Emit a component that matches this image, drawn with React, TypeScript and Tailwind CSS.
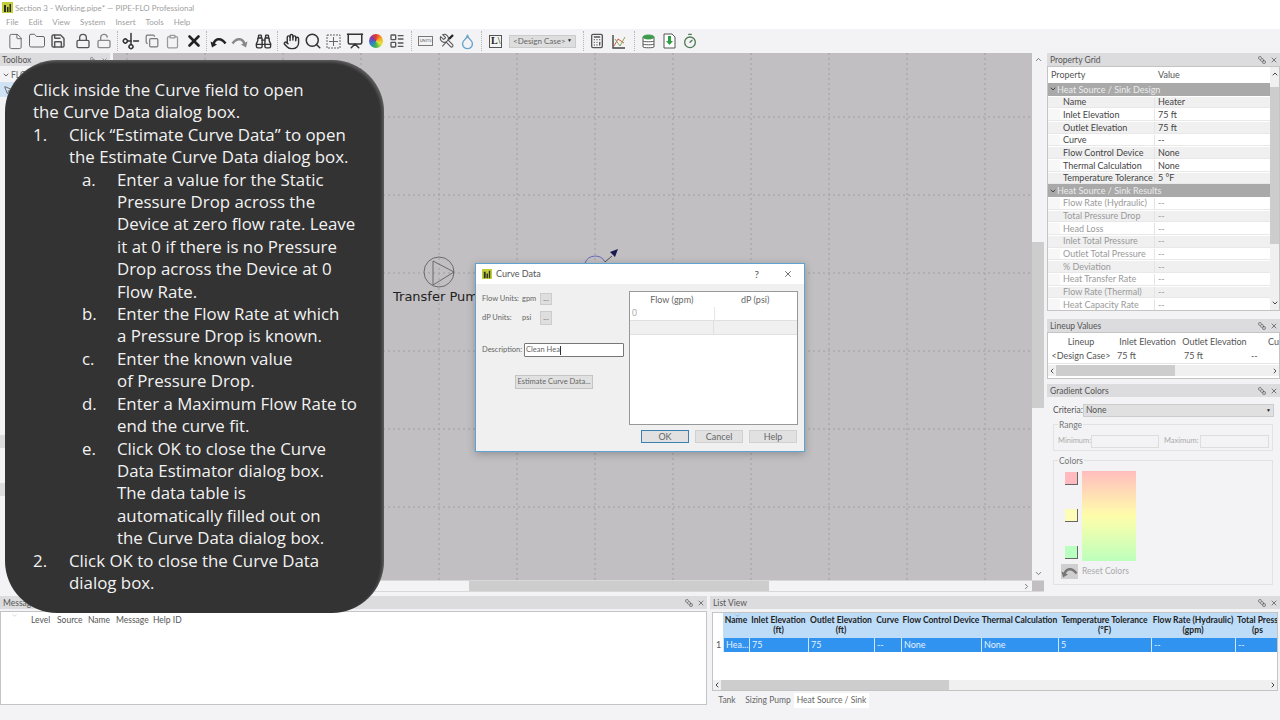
import type { ReactNode } from "react";
import {
  Binoculars, Calculator, ChevronDown, ChevronLeft, ChevronRight, ChevronUp, Clipboard, Copy, File, Folder, Hand,
  LayoutList, Lock, LockOpen, MousePointer2, Presentation, Save, Scissors, Search, SquareStack, Timer, X, Droplet,
} from "lucide-react";

const ui = "font-['Lato',sans-serif]";

function PipeLogo({ size = 11 }: { size?: number }) {
  return (
    <svg width={size} height={size} viewBox="0 0 11 11">
      <rect width="11" height="11" fill="#c3cc3c" />
      <rect x="2" y="3" width="2" height="7" fill="#26301a" />
      <rect x="5" y="5" width="1.5" height="5" fill="#26301a" />
      <rect x="7.5" y="2" width="1.5" height="8" fill="#26301a" />
    </svg>
  );
}

function ArcArrow({ color, flip }: { color: string; flip?: boolean }) {
  return (
    <svg width="17" height="13" viewBox="0 0 17 13" className={flip ? "-scale-x-100" : ""}>
      <path d="M3.5 9C5 3.5 11 2 15.5 8.5" fill="none" stroke={color} strokeWidth="2.4" />
      <path d="M0.5 6.5L7 9.5L2 12.5Z" fill={color} />
    </svg>
  );
}

function Btn({ children }: { children: ReactNode }) {
  return <span className="flex h-[21px] w-[21px] shrink-0 items-center justify-center">{children}</span>;
}

function Sep({ className = "mx-[3px]" }: { className?: string }) {
  return <div className={`h-[20px] w-px shrink-0 border-l border-dotted border-[#b5b5b5] ${className}`} />;
}

function PanelHead({ title }: { title: string }) {
  return (
    <div className="flex h-[13px] items-center justify-between bg-[#dcdcde] pl-[3px] pr-[2px] pt-px text-[8.5px] text-[#555]">
      <span>{title}</span>
      <span className="flex items-center gap-[4px] text-[#444]">
        <SquareStack size={8} />
        <X size={8} />
      </span>
    </div>
  );
}

const design = [
  ["Name", "Heater"],
  ["Inlet Elevation", "75 ft"],
  ["Outlet Elevation", "75 ft"],
  ["Curve", "--"],
  ["Flow Control Device", "None"],
  ["Thermal Calculation", "None"],
  ["Temperature Tolerance", "5 °F"],
];
const results = [
  "Flow Rate (Hydraulic)",
  "Total Pressure Drop",
  "Head Loss",
  "Inlet Total Pressure",
  "Outlet Total Pressure",
  "% Deviation",
  "Heat Transfer Rate",
  "Flow Rate (Thermal)",
  "Heat Capacity Rate",
];

function GroupRow({ title }: { title: string }) {
  return (
    <div className="flex h-[12.67px] items-center bg-[#a9a9a9] pl-px text-[9px] text-[#ececec]">
      <ChevronDown size={8} strokeWidth={3} className="text-[#444]" />
      {title}
    </div>
  );
}

function PropRow({ label, value, dim, odd }: { label: string; value: string; dim?: boolean; odd: boolean }) {
  return (
    <div className={`flex h-[12.67px] items-center whitespace-nowrap border-b border-[#e8e8e8] pt-px text-[9px] ${dim ? "text-[#9a9a9a]" : "text-[#444]"}`}>
      <div className={`h-full w-[12px] ${odd ? "bg-[#f0f0f0]" : "bg-[#f7f7f7]"}`} />
      <div className={`flex h-full w-[95px] items-center border-r border-[#e4e4e4] pl-[3px] ${odd ? "bg-[#f0f0f0]" : "bg-white"}`}>{label}</div>
      <div className={`flex h-full flex-1 items-center pl-[3px] ${odd ? "bg-[#f0f0f0]" : "bg-white"}`}>{value}</div>
    </div>
  );
}

function Scrollbar() {
  return (
    <div className="flex w-[9px] flex-col items-center bg-[#f0f0f0]">
      <ChevronUp size={8} strokeWidth={3} className="mt-[3px] text-[#444]" />
      <div className="mt-[9px] h-[157px] w-full bg-[#cdcdcd]" />
      <div className="flex-1" />
      <ChevronDown size={8} strokeWidth={3} className="my-[3px] text-[#444]" />
    </div>
  );
}

function Swatch({ color }: { color: string }) {
  return <div className="h-[13px] w-[13px] border-b border-r border-[#666]" style={{ backgroundColor: color }} />;
}

const listCols = "grid-cols-[10px_26px_59px_66px_27px_80px_77px_93px_84px_45px]";
const listHead = [
  ["Name", ""],
  ["Inlet Elevation", "(ft)"],
  ["Outlet Elevation", "(ft)"],
  ["Curve", ""],
  ["Flow Control Device", ""],
  ["Thermal Calculation", ""],
  ["Temperature Tolerance", "(°F)"],
  ["Flow Rate (Hydraulic)", "(gpm)"],
  ["Total Press", "(ps"],
];
const listRow = ["Hea...", "75", "75", "--", "None", "None", "5", "--", "--"];

function Canvas() {
  const xs = [0, 1, 2, 3, 4, 5, 6, 7, 8, 9, 10, 11].map((k) => 14 + k * 78);
  const ys = [0, 1, 2, 3, 4, 5, 6].map((k) => 64 - 78 + k * 78);
  return (
    <div className="relative flex-1 overflow-hidden bg-[#c1bfc1]">
      <svg className="absolute inset-0 h-full w-full">
        {xs.map((x) => (
          <line key={x} x1={x} x2={x} y1="0" y2="540" stroke="#a09ea0" strokeWidth="1" strokeDasharray="2 3" />
        ))}
        {ys.map((y) => (
          <line key={y} x1="0" x2="930" y1={y} y2={y} stroke="#a09ea0" strokeWidth="1" strokeDasharray="2 3" />
        ))}
        <circle cx="326" cy="219" r="15" fill="none" stroke="#555" strokeWidth="0.8" />
        <path d="M320 208L341 219L320 232Z" fill="none" stroke="#555" strokeWidth="0.8" />
        <path d="M472 210A11 11 0 0 1 492 209" fill="none" stroke="#4f4fb5" strokeWidth="0.8" />
        <path d="M492 209L499 203" stroke="#333" strokeWidth="0.8" />
        <path d="M497 199L505 196L502 204Z" fill="#1a1a50" />
      </svg>
      <span className="absolute left-[280px] top-[234px] whitespace-nowrap font-['DejaVu_Sans',sans-serif] text-[13px] text-[#222]">
        Transfer Pump
      </span>
    </div>
  );
}

function CurveDialog() {
  return (
    <div className="absolute left-[475px] top-[263px] flex h-[189px] w-[330px] flex-col border border-[#5fa3d0] bg-[#f0f0f0] text-[7.5px] text-[#666] shadow-[0_2px_8px_rgba(0,0,0,0.25)]">
      <div className="flex h-[20px] shrink-0 items-center bg-white pl-[6px] text-[9px] text-[#555]">
        <PipeLogo size={10} />
        <span className="ml-[4px] flex-1">Curve Data</span>
        <span className="mr-[24px] text-[10px]">?</span>
        <X size={10} className="mr-[11px]" />
      </div>
      <div className="flex flex-1 whitespace-nowrap pl-[6px] pr-[6px] pt-[7px]">
        <div className="w-[147px] pt-[2px]">
          <div className="flex h-[12px] items-center">
            <span className="w-[40px]">Flow Units:</span>
            <span className="w-[18px]">gpm</span>
            <span className="flex h-[12px] w-[12px] items-center justify-center border border-[#ccc] bg-[#dedede]">...</span>
          </div>
          <div className="mt-[6px] flex h-[14px] items-center">
            <span className="w-[40px]">dP Units:</span>
            <span className="w-[18px]">psi</span>
            <span className="flex h-[14px] w-[12px] items-center justify-center border border-[#ccc] bg-[#dedede]">...</span>
          </div>
          <div className="mt-[18px] flex items-center">
            <span className="w-[42px]">Description:</span>
            <div className="flex h-[14px] w-[100px] items-center rounded-[1px] border border-[#777] bg-white pl-[1px]">
              Clean Hea<span className="h-[9px] w-px bg-[#333]" />
            </div>
          </div>
          <div className="ml-[33px] mt-[18px] flex h-[14px] w-[78px] items-center justify-center border border-[#c4c4c4] bg-[#e1e1e1]">
            Estimate Curve Data...
          </div>
        </div>
        <div className="flex flex-1 flex-col">
          <div className="h-[134px] border border-[#999] bg-white">
            <div className="grid h-[15px] grid-cols-2 items-center text-center text-[9px]">
              <span>Flow (gpm)</span>
              <span>dP (psi)</span>
            </div>
            <div className="grid h-[14px] grid-cols-2 border-b border-[#e0e0e0] pl-[2px] text-[8.5px] text-[#aaa]">
              <span className="border-r border-[#e6e6e6]">0</span>
              <span />
            </div>
            <div className="grid h-[14px] grid-cols-2 border-b border-[#e0e0e0] bg-[#f0f0f0]">
              <span className="border-r border-[#e0e0e0]" />
              <span />
            </div>
          </div>
          <div className="mt-[5px] flex justify-end gap-[6px] pr-px text-[9px]">
            <div className="flex h-[13px] w-[48px] items-center justify-center border border-[#3c7fb1] bg-[#e1e1e1]">OK</div>
            <div className="flex h-[13px] w-[48px] items-center justify-center border border-[#d0d0d0] bg-[#e1e1e1]">Cancel</div>
            <div className="flex h-[13px] w-[48px] items-center justify-center border border-[#d0d0d0] bg-[#e1e1e1]">Help</div>
          </div>
        </div>
      </div>
    </div>
  );
}

function Callout() {
  const sub = [
    ["a.", "Enter a value for the Static\nPressure Drop across the\nDevice at zero flow rate. Leave\nit at 0 if there is no Pressure\nDrop across the Device at 0\nFlow Rate."],
    ["b.", "Enter the Flow Rate at which\na Pressure Drop is known."],
    ["c.", "Enter the known value\nof Pressure Drop."],
    ["d.", "Enter a Maximum Flow Rate to\nend the curve fit."],
    ["e.", "Click OK to close the Curve\nData Estimator dialog box.\nThe data table is\nautomatically filled out on\nthe Curve Data dialog box."],
  ];
  return (
    <div className="absolute left-[5px] top-[60px] h-[553px] w-[379px] rounded-[52px] bg-[#333333] pl-[28px] pt-[19px] font-['Open_Sans',sans-serif] text-[16.85px] leading-[22.4px] text-[#f2f2f2] shadow-[inset_-2px_2px_3px_rgba(255,255,255,0.2)]">
      <p>
        Click inside the Curve field to open
        <br />
        the Curve Data dialog box.
      </p>
      <div className="flex">
        <span className="w-[36px]">1.</span>
        <span>
          Click “Estimate Curve Data” to open
          <br />
          the Estimate Curve Data dialog box.
        </span>
      </div>
      {sub.map(([k, t]) => (
        <div key={k} className="flex pl-[49px]">
          <span className="w-[35px]">{k}</span>
          <span className="whitespace-pre-line">{t}</span>
        </div>
      ))}
      <div className="flex">
        <span className="w-[36px]">2.</span>
        <span>
          Click OK to close the Curve Data
          <br />
          dialog box.
        </span>
      </div>
    </div>
  );
}

export default function App() {
  return (
    <div className={`relative flex h-[720px] w-[1280px] flex-col overflow-hidden bg-[#f3f3f5] ${ui}`}>
      {/* title + menu */}
      <div className="flex h-[15px] items-center bg-white pl-[2px] text-[8px] text-[#a0a0a0]">
        <PipeLogo />
        <span className="ml-[2px]">Section 3 - Working.pipe* — PIPE-FLO Professional</span>
      </div>
      <div className="flex h-[14px] items-center gap-[10px] bg-white pl-[6px] text-[8px] text-[#a0a0a0]">
        {["File", "Edit", "View", "System", "Insert", "Tools", "Help"].map((m) => (
          <span key={m}>{m}</span>
        ))}
      </div>

      {/* toolbar */}
      <div className="flex h-[24px] items-center pl-[5px]">
        <Btn><File size={17} strokeWidth={1.2} className="text-[#555]" /></Btn>
        <Btn><Folder size={18} strokeWidth={1.2} className="text-[#555]" /></Btn>
        <Btn><Save size={16} strokeWidth={2.2} className="text-[#555]" /></Btn>
        <span className="w-[4px]" />
        <Btn><Lock size={16} className="text-[#555]" /></Btn>
        <Btn><LockOpen size={16} className="text-[#888]" /></Btn>
        <Sep className="mx-[2.5px]" />
        <Btn><Scissors size={16} strokeWidth={2.2} className="rotate-[-45deg] text-[#333]" /></Btn>
        <Btn><Copy size={14} className="text-[#777]" /></Btn>
        <Btn><Clipboard size={15} className="text-[#999]" /></Btn>
        <Btn><X size={18} strokeWidth={3.5} className="text-[#222]" /></Btn>
        <Sep className="mx-[1.5px]" />
        <Btn><ArcArrow color="#222" /></Btn>
        <Btn><ArcArrow color="#888" flip /></Btn>
        <span className="w-[3px]" />
        <Btn><Binoculars size={17} className="text-[#333]" /></Btn>
        <Sep />
        <Btn><Hand size={17} className="text-[#333]" /></Btn>
        <Btn><Search size={18} className="text-[#333]" /></Btn>
        <Btn>
          <svg width="15" height="15" viewBox="0 0 15 15" fill="none" stroke="#666">
            <rect x="1" y="1" width="13" height="13" strokeDasharray="2 1" />
            <path d="M7.5 3V12M3 7.5H12" />
          </svg>
        </Btn>
        <Btn><Presentation size={18} className="text-[#333]" /></Btn>
        <Btn><span className="h-[14px] w-[14px] rounded-full bg-[conic-gradient(#e8372c,#f5a623,#e8e23a,#3eb54a,#2f80d0,#7b3fb0,#e8372c)]" /></Btn>
        <Btn><LayoutList size={16} className="text-[#555]" /></Btn>
        <span className="w-[1px]" />
        <Sep />
        <Btn><span className="flex h-[10px] w-[15px] items-center justify-center border border-[#777] text-[4px] text-[#555]">UNITS</span></Btn>
        <Btn>
          <svg width="16" height="16" viewBox="0 0 24 24" fill="none" stroke="#555" strokeWidth="1.6">
            <g transform="translate(24 0) scale(-1 1)">
              <path d="M14.7 6.3a1 1 0 0 0 0 1.4l1.6 1.6a1 1 0 0 0 1.4 0l3.77-3.77a6 6 0 0 1-7.94 7.94l-6.91 6.91a2.12 2.12 0 0 1-3-3l6.91-6.91a6 6 0 0 1 7.94-7.94l-3.76 3.76z" />
            </g>
            <path d="M21 3L15 9" stroke="#222" strokeWidth="3.5" />
            <path d="M15 9L5 20" />
          </svg>
        </Btn>
        <Btn><Droplet size={17} className="text-[#6aa5c8]" /></Btn>
        <Sep />
        <Btn>
          <span className="flex h-[13px] w-[13px] items-center border border-[#555] pl-px font-['Liberation_Serif',serif] text-[10px] font-bold leading-none text-[#222]">
            L<span className="text-[#4a6a2a]">\</span>
          </span>
        </Btn>
        <span className="ml-[3px] flex h-[13px] w-[67px] shrink-0 items-center justify-between border border-[#ccc] bg-[#dedede] pl-[3px] pr-[3px] text-[8px] text-[#666]">
          &lt;Design Case&gt;
          <span className="text-[5px] text-[#222]">▼</span>
        </span>
        <span className="w-[3.5px]" />
        <Sep />
        <Btn><Calculator size={16} className="text-[#555]" /></Btn>
        <Btn>
          <svg width="15" height="15" viewBox="0 0 15 15" fill="none">
            <path d="M2 1V14H14" stroke="#444" strokeWidth="1.4" />
            <path d="M3 12L7 5L13 9" stroke="#d05a3c" />
            <path d="M4 5L9 12L14 3" stroke="#8aa85a" />
          </svg>
        </Btn>
        <span className="w-[2px]" />
        <Sep />
        <Btn>
          <svg width="15" height="15" viewBox="0 0 15 15" fill="none">
            <path d="M2 3V13C2 14 13 14 13 13V3" fill="#fff" stroke="#555" />
            <path d="M2 7C2 8 13 8 13 7M2 10C2 11 13 11 13 10" stroke="#555" />
            <ellipse cx="7.5" cy="3" rx="5.5" ry="2" fill="#3f9a4e" stroke="#3f9a4e" />
          </svg>
        </Btn>
        <Btn>
          <svg width="15" height="16" viewBox="0 0 15 16" fill="none">
            <path d="M2 1H10L13 4V15H2Z" fill="#fff" stroke="#555" />
            <path d="M6 3H9V8H11L7.5 12L4 8H6Z" fill="#2e9f3f" />
          </svg>
        </Btn>
        <Btn><Timer size={16} className="text-[#4f7a56]" /></Btn>
      </div>

      {/* main */}
      <div className="flex h-[542px] shrink-0">
        <div className="flex w-[113px] shrink-0 flex-col bg-[#f3f3f5] pr-[3px]">
          <div className="flex h-[13px] shrink-0 items-center justify-between bg-[#dcdcde] pl-[2px] pr-[2px] pt-px text-[8.5px] text-[#555]">
            Toolbox
            <span className="flex items-center gap-[4px]">
              <SquareStack size={7} />
              <X size={7} />
            </span>
          </div>
          <div className="mt-[2px] flex h-[14px] items-center pl-[2px] text-[8.5px] text-[#666]">
            <ChevronDown size={8} strokeWidth={3} className="mr-[1px]" />
            FLOW
          </div>
          <div className="flex h-[15px] w-[16px] items-center justify-center bg-[#cfe3f5]">
            <MousePointer2 size={10} className="text-[#555]" />
          </div>
          <div className="mt-[338px] h-[13px] w-[5px] bg-[#dcdcdc]" />
          <div className="mt-[35px] h-[13px] w-[5px] bg-[#dcdcdc]" />
        </div>
        <div className="flex w-[931px] shrink-0 flex-col pb-[3px]">
          <div className="flex min-h-0 flex-1">
            <Canvas />
            <div className="flex w-[12px] flex-col items-center bg-[#f3f3f5]">
              <ChevronUp size={9} className="my-[2px] text-[#555]" />
              <div className="mt-[176px] h-[166px] w-full bg-[#cdcdcd]" />
              <div className="flex-1" />
              <ChevronDown size={9} className="my-[2px] text-[#555]" />
            </div>
          </div>
          <div className="flex h-[12px] items-center border-y border-[#d8d8d8] bg-[#f3f3f5]">
            <div className="h-full w-[356px]" />
            <div className="h-full w-[300px] bg-[#cdcdcd]" />
            <div className="flex-1" />
            <ChevronRight size={9} className="mr-[1px] text-[#555]" />
            <div className="h-full w-[12px] bg-[#c1bfc1]" />
          </div>
        </div>

        {/* right panels */}
        <div className="ml-[3px] flex w-[233px] shrink-0 flex-col">
          <PanelHead title="Property Grid" />
          <div className="flex h-[245px] shrink-0 border border-[#c4c4c4] bg-white">
            <div className="flex-1 overflow-hidden">
              <div className="flex h-[16px] items-center text-[9px] text-[#555]">
                <span className="w-[107px] pl-[3px]">Property</span>
                <span className="pl-[3px]">Value</span>
              </div>
              <GroupRow title="Heat Source / Sink Design" />
              {design.map(([l, v], i) => (
                <PropRow key={l} label={l} value={v} odd={i % 2 === 0} />
              ))}
              <GroupRow title="Heat Source / Sink Results" />
              {results.map((l, i) => (
                <PropRow key={l} label={l} value="--" dim odd={i % 2 === 1} />
              ))}
            </div>
            <Scrollbar />
          </div>

          <div className="mt-[8px]">
            <PanelHead title="Lineup Values" />
          </div>
          <div className="h-[47px] shrink-0 whitespace-nowrap border border-[#c4c4c4] bg-white pt-px text-[9px] text-[#555]">
            <div className="grid h-[15px] grid-cols-[66px_67px_67px_1fr] items-center text-center">
              <span>Lineup</span>
              <span>Inlet Elevation</span>
              <span>Outlet Elevation</span>
              <span className="text-right">Cu</span>
            </div>
            <div className="grid h-[15px] grid-cols-[66px_67px_67px_1fr] items-center border-b border-[#e4e4e4]">
              <span className="text-center">&lt;Design Case&gt;</span>
              <span className="pl-[3px]">75 ft</span>
              <span className="pl-[3px]">75 ft</span>
              <span className="pl-[3px]">--</span>
            </div>
            <div className="mt-[1px] flex h-[11px] items-center bg-[#f0f0f0]">
              <ChevronLeft size={8} strokeWidth={3} />
              <div className="h-full w-[119px] bg-[#cdcdcd]" />
              <div className="flex-1" />
              <ChevronRight size={8} strokeWidth={3} />
            </div>
          </div>

          <div className="mt-[5px]">
            <PanelHead title="Gradient Colors" />
          </div>
          <div className="flex-1 whitespace-nowrap px-[6px] pt-[7px] text-[8.5px] text-[#777]">
            <div className="flex items-center">
              <span className="w-[30px] text-[#555]">Criteria:</span>
              <span className="flex h-[13px] flex-1 items-center justify-between border border-[#ccc] bg-[#e0e0e0] px-[2px] text-[8.5px] text-[#555]">
                None
                <span className="text-[5px] text-[#222]">▼</span>
              </span>
            </div>
            <div className="relative mr-px mt-[7px] flex h-[27px] items-center gap-[4px] border border-[#e2e2e2] pl-[4px] pt-[7px] text-[7.5px] text-[#aaa]">
              <span className="absolute -top-[6px] left-[4px] bg-[#f3f3f5] px-[1px] text-[8.5px] text-[#777]">Range</span>
              <span className="w-[29px]">Minimum:</span>
              <span className="h-[13px] w-[68px] border border-[#ddd]" />
              <span className="ml-[1px] w-[32px]">Maximum:</span>
              <span className="h-[13px] w-[69px] border border-[#ddd]" />
            </div>
            <div className="relative mr-px mt-[9px] h-[125px] border border-[#e2e2e2]">
              <span className="absolute -top-[6px] left-[4px] bg-[#f3f3f5] px-[1px] text-[#777]">Colors</span>
              <div className="flex gap-[4px] pl-[11px] pt-[10px]">
                <div className="flex h-[88px] flex-col justify-between pt-px">
                  <Swatch color="#ffb9bf" />
                  <Swatch color="#fdfdb9" />
                  <Swatch color="#b9ffc0" />
                </div>
                <div className="h-[90px] w-[54px] bg-gradient-to-b from-[#ffbdbd] via-[#fdfdaa] to-[#bcffbc]" />
              </div>
              <div className="mt-[3px] flex items-center gap-[4px] pl-[7px] text-[#aaa]">
                <span className="flex h-[15px] w-[17px] items-center justify-center bg-[#cfcfcf]">
                  <ArcArrow color="#777" />
                </span>
                Reset Colors
              </div>
            </div>
          </div>
        </div>
      </div>

      {/* bottom */}
      <div className="mt-[1px] flex flex-1">
        <div className="w-[707px] shrink-0">
          <PanelHead title="Messages" />
          <div className="relative mt-[2px] h-[94px] border border-[#c4c4c4] bg-white text-[8.5px] text-[#555]">
            <ChevronDown size={7} className="absolute left-[10px] top-0 text-[#bbb]" />
            <div className="flex h-[16px] items-center pl-[27px]">
              <span className="w-[26px] pl-[3px]">Level</span>
              <span className="w-[31px] pl-[3px]">Source</span>
              <span className="w-[28px] pl-[3px]">Name</span>
              <span className="w-[37px] pl-[3px]">Message</span>
              <span className="pl-[3px]">Help ID</span>
            </div>
          </div>
        </div>
        <div className="ml-[3px] min-w-0 flex-1">
          <PanelHead title="List View" />
          <div className="relative ml-[2px] mr-[2px] mt-[3px] h-[79px] overflow-hidden border border-[#c4c4c4] bg-white">
            <ChevronDown size={7} className="absolute left-[21px] top-[-1px] text-[#7a9cc0]" />
            <div className={`grid h-[25px] ${listCols} bg-[#bcdcf8] text-center text-[8.5px] font-bold leading-[10px] text-[#222]`}>
              <span className="bg-white" />
              {listHead.map(([a, b]) => (
                <span key={a} className="whitespace-nowrap pt-[2px]">
                  {a}
                  <br />
                  {b}
                </span>
              ))}
            </div>
            <div className={`grid h-[14px] ${listCols} items-center text-[9px] text-[#e6f2ff]`}>
              <span className="pl-[3px] text-[#555]">1</span>
              {listRow.map((c, i) => (
                <span key={i} className="flex h-full items-center border-l border-[#cfe6fb] bg-[#2f93ef] pl-[2px]">
                  {c}
                </span>
              ))}
            </div>
            <div className="h-[28px]" />
            <div className="flex h-[10px] items-center bg-[#f0f0f0] text-[#444]">
              <ChevronLeft size={8} strokeWidth={3} />
              <div className="h-full w-[228px] bg-[#cdcdcd]" />
              <div className="flex-1" />
              <ChevronRight size={8} strokeWidth={3} />
            </div>
          </div>
          <div className="mt-[2px] flex h-[15px] items-center pl-[2px] text-[8.5px] text-[#666]">
            <span className="flex h-full w-[30px] items-center justify-center">Tank</span>
            <span className="flex h-full w-[52px] items-center justify-center">Sizing Pump</span>
            <span className="flex h-full w-[75px] items-center justify-center bg-white">Heat Source / Sink</span>
          </div>
        </div>
      </div>

      <CurveDialog />
      <Callout />
    </div>
  );
}
